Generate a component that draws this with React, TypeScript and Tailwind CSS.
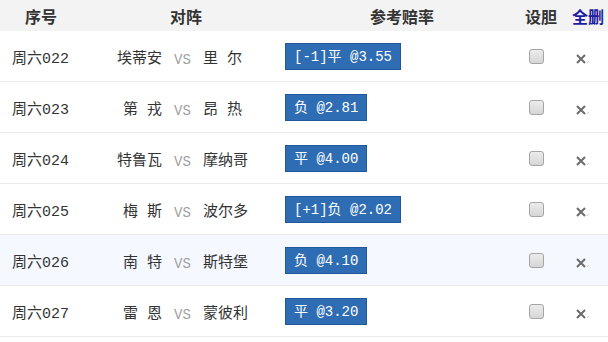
import React from "react";

const rows = [
  { no: "周六022", home: "埃蒂安", away: "里 尔", odds: "[-1]平 @3.55", hl: false },
  { no: "周六023", home: "第 戎", away: "昂 热", odds: "负 @2.81", hl: false },
  { no: "周六024", home: "特鲁瓦", away: "摩纳哥", odds: "平 @4.00", hl: false },
  { no: "周六025", home: "梅 斯", away: "波尔多", odds: "[+1]负 @2.02", hl: false },
  { no: "周六026", home: "南 特", away: "斯特堡", odds: "负 @4.10", hl: true },
  { no: "周六027", home: "雷 恩", away: "蒙彼利", odds: "平 @3.20", hl: false },
];

const mono = { fontFamily: "'Liberation Mono','Noto Sans CJK SC',monospace" };
const sans = { fontFamily: "'Noto Sans CJK SC','Noto Sans',sans-serif" };

function XIcon() {
  return (
    <svg width="16" height="12" viewBox="0 0 16 12">
      <path d="M2 2 L10 10 M10 2 L2 10" stroke="#6b6b6b" strokeWidth="2" strokeLinecap="butt" />
      <path d="M12 10 L14 8" stroke="#cfcfcf" strokeWidth="1" />
    </svg>
  );
}

export default function App() {
  return (
    <div className="w-[608px] h-[342px] bg-white overflow-hidden">
      <div className="flex h-[31px] items-center bg-[#f3f3f3] text-[16px] font-bold text-[#333]" style={sans}>
        <div className="w-[82px] text-center">序号</div>
        <div className="w-[208px] text-center">对阵</div>
        <div className="w-[224px] text-center">参考赔率</div>
        <div className="w-[54px] text-center">设胆</div>
        <div className="w-[40px] text-center text-[#1d1d9e]">全删</div>
      </div>
      {rows.map((r) => (
        <div
          key={r.no}
          className={`flex h-[51px] items-center border-b border-[#ebebeb] text-[15px] text-[#333] ${r.hl ? "bg-[#f5f9ff]" : "bg-white"}`}
          style={mono}
        >
          <div className="w-[82px] pl-3 pt-[8px]">{r.no}</div>
          <div className="w-[80px] text-right whitespace-pre pt-[8px]">{r.home}</div>
          <div className="w-[41px] text-center text-[14px] text-[#a0a0a0] pt-[8px]">VS</div>
          <div className="w-[82px] whitespace-pre pt-[8px]">{r.away}</div>
          <div className="w-[229px]">
            <span className="inline-flex h-[27px] items-center border border-[#22589a] bg-[#2e6db4] px-2 pt-[2px] text-[14px] text-white whitespace-pre">
              {r.odds}
            </span>
          </div>
          <div className="w-[44px] flex justify-center">
            <span className="block h-[15px] w-[15px] rounded-[3px] border border-[#a5a5a5] bg-gradient-to-b from-[#ececec] to-[#d6d6d6]" />
          </div>
          <div className="w-[50px] flex justify-center pt-[6px]">
            <XIcon />
          </div>
        </div>
      ))}
    </div>
  );
}
